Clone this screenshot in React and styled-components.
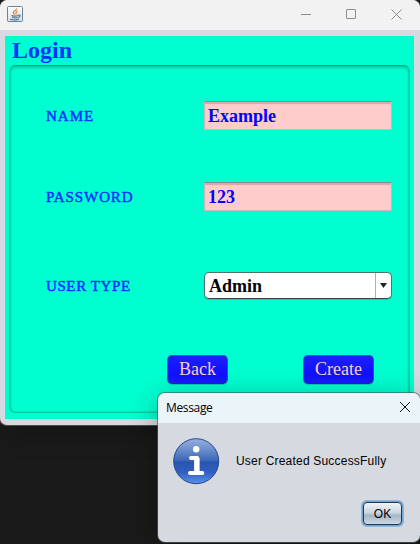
import React from "react";
import styled, { createGlobalStyle } from "styled-components";

const GlobalStyle = createGlobalStyle`
  * { box-sizing: border-box; }
  html, body { margin: 0; height: 100%; background: #1a1a1a; overflow: hidden; }
`;

const Desktop = styled.main`
  position: relative;
  width: 420px;
  height: 544px;
  overflow: hidden;
  background: #1a1a1a;
  font-family: "Liberation Serif", serif;
`;

const Window = styled.section`
  display: flex;
  flex-direction: column;
  height: 425px;
  border-radius: 8px 8px 7px 7px;
  overflow: hidden;
  background: #d6d9e0;
  box-shadow: 0 0 0 1px #4b4b4b, 0 4px 30px rgba(0, 0, 0, 0.25);
`;

const TitleBar = styled.header`
  display: flex;
  align-items: center;
  justify-content: space-between;
  flex: none;
  height: 30px;
  padding: 0 18px 2px 7px;
  background: #f2f2f2;
`;

const WindowControls = styled.div`
  display: flex;
  gap: 35px;
  svg { display: block; }
`;

const Content = styled.div`
  display: flex;
  flex-direction: column;
  flex: 1;
  margin: 6px 6px 6px 5px;
  padding: 0 4px 6px;
  background: #00ffd0;
`;

const Heading = styled.h1`
  margin: 0;
  height: 29px;
  padding-left: 3px;
  font-size: 24px;
  line-height: 28px;
  font-weight: 700;
  color: #0033ff;
`;

const Panel = styled.form`
  flex: 1;
  border: 1px solid #00c8a3;
  border-top-color: #00a88a;
  border-radius: 6px;
  padding: 35px 17px 0 35px;
  box-shadow: inset 0 2px 3px rgba(0, 100, 80, 0.28), inset 1px 0 2px rgba(0, 100, 80, 0.2),
    inset -1px 0 2px rgba(0, 100, 80, 0.2);
`;

const Row = styled.div`
  display: grid;
  grid-template-columns: 159px 188px;
  align-items: center;
  height: ${(p) => p.$height}px;
  margin-bottom: ${(p) => p.$gap}px;
`;

const Label = styled.label`
  padding: 1px 0 0 1px;
  font-size: 15px;
  line-height: 20px;
  letter-spacing: ${(p) => p.$spacing}px;
  white-space: nowrap;
  color: #0033ff;
  -webkit-text-stroke: 0.5px #0033ff;
`;

const Input = styled.input`
  width: 188px;
  height: 29px;
  padding: 1px 3px 0;
  border: 1px solid #c8b8b9;
  border-top: 1px solid #8c8c8c;
  border-radius: 0;
  outline: none;
  background: #ffcccc;
  box-shadow: inset 0 2px 1px #d6a7aa;
  font: 700 18px "Liberation Serif", serif;
  color: #0000ff;
`;

const Combo = styled.div`
  display: flex;
  width: 188px;
  height: 27px;
  border: 1px solid #50716c;
  border-bottom-color: #304642;
  border-radius: 5px;
  overflow: hidden;
  background: #fff;
  box-shadow: 0 1px 1px rgba(0, 90, 75, 0.25);
`;

const ComboValue = styled.span`
  flex: 1;
  padding-left: 4px;
  font-size: 18px;
  line-height: 26px;
  font-weight: 700;
  color: #000;
`;

const ComboArrow = styled.span`
  display: flex;
  align-items: center;
  justify-content: center;
  width: 16px;
  border-left: 1px solid #aeb2b5;
`;

const Actions = styled.div`
  display: flex;
  justify-content: space-between;
  padding: 0 18px 0 122px;
`;

const ActionButton = styled.button`
  width: ${(p) => p.$width}px;
  height: 29px;
  padding: 0;
  border: 1px solid #35568f;
  border-bottom-color: #173a5c;
  border-radius: 5px;
  background: linear-gradient(#1a20ff, #1414ff 50%, #1010ff 70%, #191cff);
  font: 18px "Liberation Serif", serif;
  color: #ffcccc;
  box-shadow: 0 1px 0 rgba(0, 100, 80, 0.3);
`;

const Dialog = styled.section`
  position: absolute;
  left: 158px;
  top: 393px;
  width: 262px;
  height: 149px;
  display: flex;
  flex-direction: column;
  border-radius: 7px;
  overflow: hidden;
  background: #d6d9e0;
  box-shadow: 0 0 0 1px rgba(70, 90, 90, 0.65), 0 6px 30px rgba(0, 0, 0, 0.32);
`;

const DialogBar = styled.header`
  display: flex;
  align-items: center;
  justify-content: space-between;
  flex: none;
  height: 30px;
  padding: 0 10px 2px 8px;
  background: #ebf4f8;
  font: 12px "Open Sans", sans-serif;
  color: #000;
`;

const DialogTitle = styled.span`
  padding-top: 1px;
  letter-spacing: -0.35px;
`;

const DialogBody = styled.div`
  display: flex;
  align-items: center;
  gap: 16px;
  height: 47px;
  margin: 15px 0 0 15px;
  font: 12px "Liberation Sans", sans-serif;
  color: #000;
`;

const DialogText = styled.span`
  padding-bottom: 2px;
  white-space: nowrap;
  letter-spacing: 0.2px;
`;

const DialogFooter = styled.footer`
  display: flex;
  justify-content: flex-end;
  padding: 17px 18px 0 0;
`;

const OkButton = styled.button`
  width: 39px;
  height: 23px;
  padding: 1px 0 0;
  border: 1px solid #24384e;
  border-radius: 4px;
  background: linear-gradient(#f0f3f6, #cdd6df 45%, #a5b7c7 60%, #c9d9e6);
  box-shadow: 0 0 0 1px #73a4d1, 0 0 0 2px #8fb5da;
  font: 12px "Liberation Sans", sans-serif;
  color: #000;
`;

function JavaIcon() {
  return (
    <svg width="16" height="16" viewBox="0 0 16 16" fill="none">
      <defs>
        <linearGradient id="javaTile" x2="0" y2="1">
          <stop stopColor="#fff" />
          <stop offset="1" stopColor="#d5dde3" />
        </linearGradient>
      </defs>
      <rect x=".5" y=".5" width="15" height="15" rx="1" fill="url(#javaTile)" stroke="#68869a" />
      <path d="M9.5 2.5C10 4.5 6 5 6.3 6.7c.1.9 1.4 1 1.2 2M10.5 5C8 6 9.8 6.7 8.7 8.3" stroke="#ed7625" strokeWidth="1.2" />
      <path d="M4.5 9.5c1 .8 5 .8 6.5 0M5 11.3c1.5.7 4 .7 5.5 0M3 13.2c2.5.8 7 .7 9-.1M11 9.2c3-1 2.7 1.7.2 2.2" stroke="#4b7390" strokeWidth="1.1" />
    </svg>
  );
}

function InfoIcon() {
  return (
    <svg width="47" height="47" viewBox="0 0 47 47">
      <defs>
        <linearGradient id="infoFill" x2="0" y2="1">
          <stop stopColor="#98b0df" />
          <stop offset=".28" stopColor="#6488ca" />
          <stop offset=".48" stopColor="#3c67b9" />
          <stop offset=".52" stopColor="#2855ae" />
          <stop offset=".75" stopColor="#315fc0" />
          <stop offset="1" stopColor="#5c91ed" />
        </linearGradient>
      </defs>
      <circle cx="23.2" cy="23.2" r="22.5" fill="url(#infoFill)" stroke="#24478e" />
      <circle cx="23.2" cy="11.2" r="3.2" fill="#fff" />
      <path d="M18 20h6.2v15M17 35h12.3" fill="none" stroke="#fff" strokeWidth="4" strokeLinecap="round" strokeLinejoin="round" />
      <path d="M23.8 20v15" stroke="#fff" strokeWidth="5.4" />
    </svg>
  );
}

export default function App() {
  return (
    <Desktop>
      <GlobalStyle />
      <Window>
        <TitleBar>
          <JavaIcon />
          <WindowControls>
            <svg width="10" height="10" stroke="#8c8c8c"><path d="M0 5.5h10" /></svg>
            <svg width="10" height="10" stroke="#8c8c8c" fill="none"><rect x=".5" y=".5" width="9" height="9" rx=".5" /></svg>
            <svg width="11" height="11" stroke="#8c8c8c"><path d="M.5.5l10 10m0-10l-10 10" /></svg>
          </WindowControls>
        </TitleBar>
        <Content>
          <Heading>Login</Heading>
          <Panel onSubmit={(e) => e.preventDefault()}>
            <Row $height={29} $gap={52}>
              <Label $spacing={1} htmlFor="name">NAME</Label>
              <Input id="name" defaultValue="Example" />
            </Row>
            <Row $height={29} $gap={61}>
              <Label $spacing={0.9} htmlFor="password">PASSWORD</Label>
              <Input id="password" defaultValue="123" />
            </Row>
            <Row $height={27} $gap={56}>
              <Label $spacing={0.6}>USER TYPE</Label>
              <Combo>
                <ComboValue>Admin</ComboValue>
                <ComboArrow>
                  <svg width="7" height="5"><path d="M0 0h7L3.5 5z" fill="#222" /></svg>
                </ComboArrow>
              </Combo>
            </Row>
            <Actions>
              <ActionButton type="button" $width={61}>Back</ActionButton>
              <ActionButton type="submit" $width={71}>Create</ActionButton>
            </Actions>
          </Panel>
        </Content>
      </Window>
      <Dialog role="dialog">
        <DialogBar>
          <DialogTitle>Message</DialogTitle>
          <svg width="10" height="10" stroke="#111"><path d="M0 0l10 10M10 0L0 10" /></svg>
        </DialogBar>
        <DialogBody>
          <InfoIcon />
          <DialogText>User Created SuccessFully</DialogText>
        </DialogBody>
        <DialogFooter>
          <OkButton>OK</OkButton>
        </DialogFooter>
      </Dialog>
    </Desktop>
  );
}
